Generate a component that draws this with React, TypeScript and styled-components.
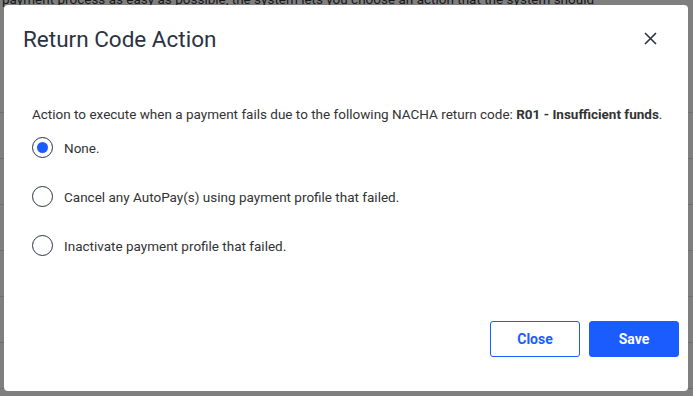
import React, { useState } from 'react';
import styled, { createGlobalStyle } from 'styled-components';

const GlobalStyle = createGlobalStyle`
    html, body {
        margin: 0;
        padding: 0;
        width: 693px;
        height: 396px;
        overflow: hidden;
        font-family: Roboto, "Liberation Sans", sans-serif;
        background: #ffffff;
    }
`;

const Page = styled.div`
    position: relative;
    width: 693px;
    height: 396px;
    overflow: hidden;
    background: #ffffff;
`;

const PageIntro = styled.p`
    margin: -10px 0 0 0;
    padding: 0 0 0 2px;
    font-size: 13.5px;
    line-height: 18px;
    color: #333;
    white-space: nowrap;
`;

const PageRows = styled.div`
    display: flex;
    flex-direction: column;
    margin-top: 104px;
`;

const PageRow = styled.div`
    height: 45px;
    border-top: 1px solid #e0e0e0;
`;

const Backdrop = styled.div`
    position: absolute;
    inset: 0;
    background: rgba(0, 0, 0, 0.5);
`;

const Modal = styled.div`
    position: absolute;
    left: 4px;
    top: 5px;
    width: 684px;
    height: 386px;
    background: #fff;
    border-radius: 4px;
    display: flex;
    flex-direction: column;
    box-sizing: border-box;
`;

const Header = styled.div`
    display: flex;
    align-items: center;
    justify-content: space-between;
    height: 67px;
    padding: 0 31px 0 19px;
    box-sizing: border-box;
`;

const Title = styled.h2`
    margin: 0;
    font-size: 22.5px;
    font-weight: 400;
    color: #2b3342;
`;

const CloseIcon = styled.button`
    display: flex;
    align-items: center;
    justify-content: center;
    border: none;
    background: none;
    padding: 0;
    width: 14px;
    height: 14px;
    cursor: pointer;
`;

const Body = styled.div`
    flex: 1;
    padding: 33px 20px 0 28px;
    display: flex;
    flex-direction: column;
`;

const Intro = styled.p`
    margin: 0;
    font-size: 13.5px;
    line-height: 18px;
    color: #333;
    white-space: nowrap;
`;

const Options = styled.div`
    display: flex;
    flex-direction: column;
    gap: 28px;
    margin-top: 14px;
`;

const Option = styled.label`
    display: flex;
    align-items: center;
    gap: 11px;
    font-size: 13.5px;
    color: #333;
    cursor: pointer;
`;

const Radio = styled.span<{ $checked: boolean }>`
    width: 21px;
    height: 21px;
    border: 1.5px solid #2b3342;
    border-radius: 50%;
    box-sizing: border-box;
    display: flex;
    align-items: center;
    justify-content: center;

    &::after {
        content: '';
        width: 11px;
        height: 11px;
        border-radius: 50%;
        background: ${(p) => (p.$checked ? '#1a5cff' : 'transparent')};
    }
`;

const Footer = styled.div`
    display: flex;
    justify-content: flex-end;
    gap: 9px;
    padding: 0 9px 34px 0;
`;

const Button = styled.button<{ $primary?: boolean }>`
    width: 90px;
    height: 36px;
    border-radius: 3px;
    font-family: Roboto, "Liberation Sans", sans-serif;
    font-size: 14px;
    font-weight: 700;
    cursor: pointer;
    border: 1px solid #1a5cff;
    color: ${(p) => (p.$primary ? '#fff' : '#1a5cff')};
    background: ${(p) => (p.$primary ? '#1a5cff' : '#fff')};
`;

const options = [
    'None.',
    'Cancel any AutoPay(s) using payment profile that failed.',
    'Inactivate payment profile that failed.',
];

const App: React.FC = () => {
    const [selected, setSelected] = useState(0);

    return (
        <Page>
            <GlobalStyle />
            <PageIntro>
                payment process as easy as possible, the system lets you choose an action that the system should
            </PageIntro>
            <PageRows>
                {Array.from({ length: 7 }).map((_, i) => (
                    <PageRow key={i} />
                ))}
            </PageRows>
            <Backdrop />
            <Modal>
                <Header>
                    <Title>Return Code Action</Title>
                    <CloseIcon aria-label="Close">
                        <svg width="13" height="13" viewBox="0 0 13 13">
                            <path d="M1 1L12 12M12 1L1 12" stroke="#2b3342" strokeWidth="1.6" />
                        </svg>
                    </CloseIcon>
                </Header>
                <Body>
                    <Intro>
                        Action to execute when a payment fails due to the following NACHA return code:{' '}
                        <b>R01 - Insufficient funds</b>.
                    </Intro>
                    <Options>
                        {options.map((o, i) => (
                            <Option key={o} onClick={() => setSelected(i)}>
                                <Radio $checked={selected === i} />
                                {o}
                            </Option>
                        ))}
                    </Options>
                </Body>
                <Footer>
                    <Button>Close</Button>
                    <Button $primary>Save</Button>
                </Footer>
            </Modal>
        </Page>
    );
};

export default App;
